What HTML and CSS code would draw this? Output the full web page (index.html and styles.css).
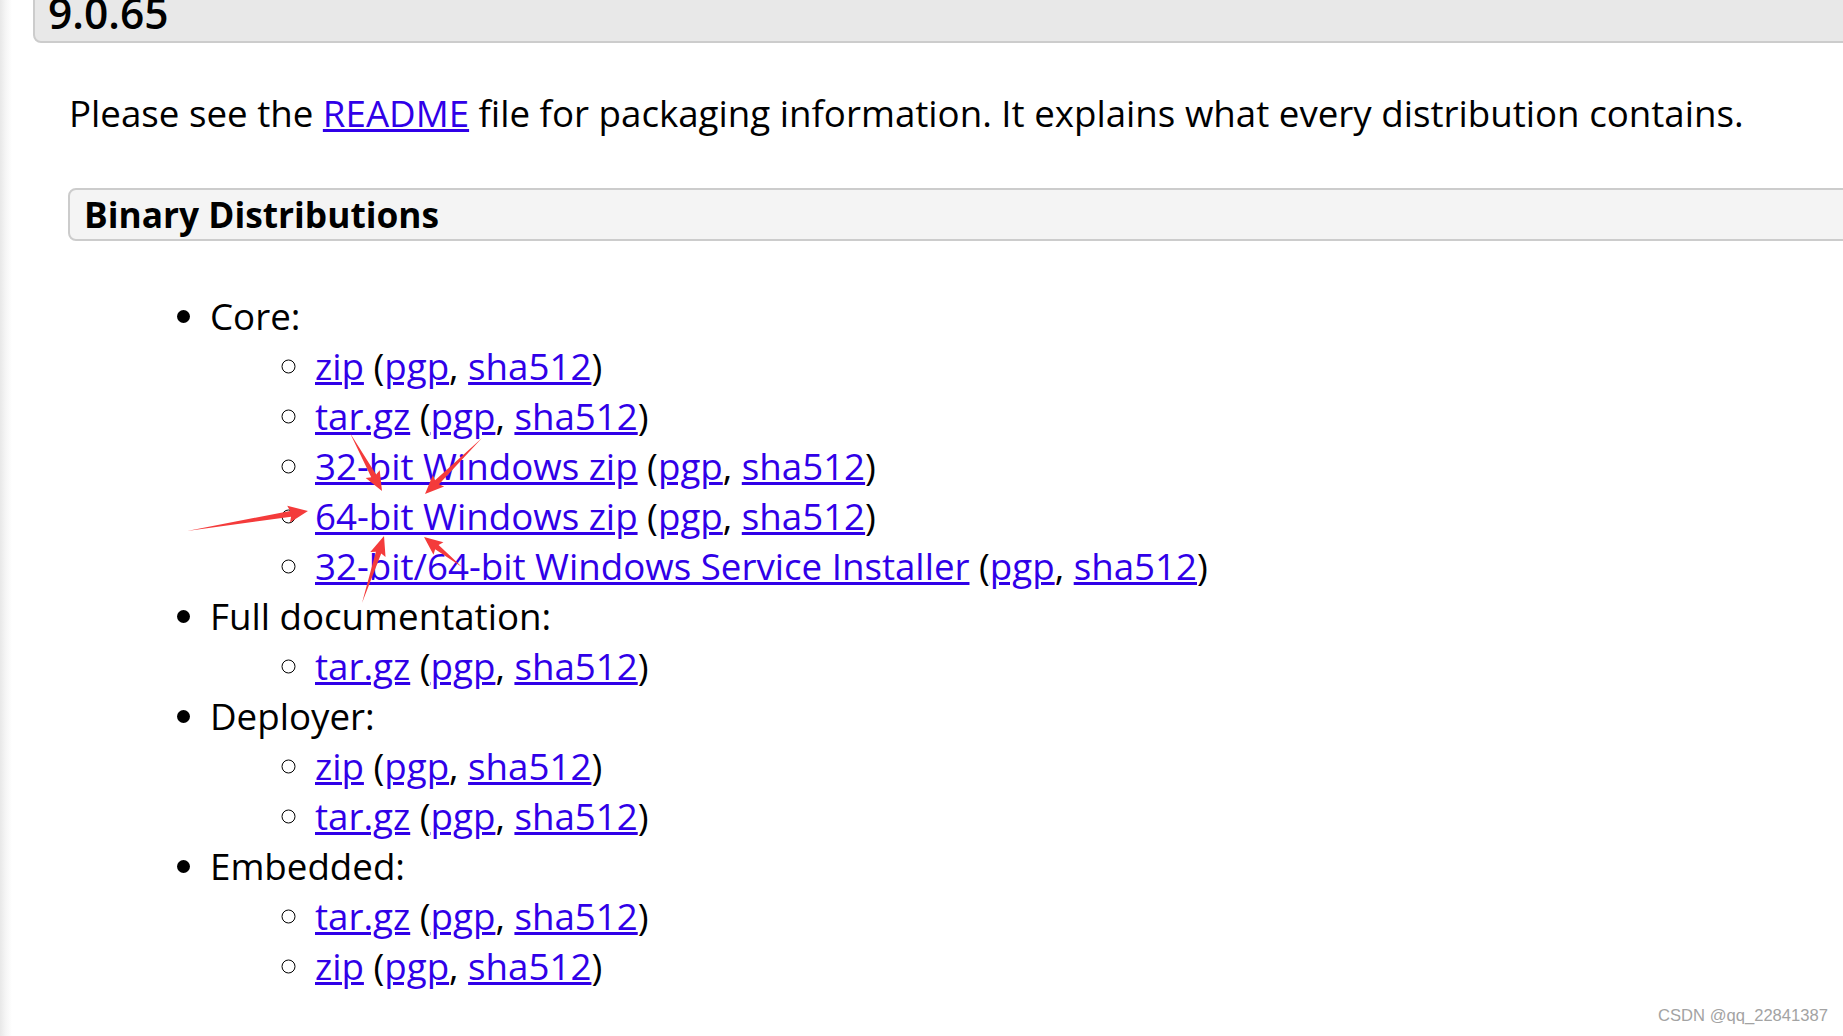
FILE: index.html
```html
<!DOCTYPE html>
<html lang="en">
<head>
<meta charset="utf-8">
<title>Apache Tomcat 9.0.65</title>
<link rel="stylesheet" href="styles.css">
</head>
<body>
<div class="page">
  <h3 class="version">9.0.65</h3>
  <div class="text">
    <p class="intro">Please see the <a href="#">README</a> file for packaging information. It explains what every distribution contains.</p>
    <h4 class="dist">Binary Distributions</h4>
    <ul class="dl">
      <li>Core:
        <ul>
          <li><a href="#">zip</a> (<a href="#">pgp</a>, <a href="#">sha512</a>)</li>
          <li><a href="#">tar.gz</a> (<a href="#">pgp</a>, <a href="#">sha512</a>)</li>
          <li><a href="#">32-bit Windows zip</a> (<a href="#">pgp</a>, <a href="#">sha512</a>)</li>
          <li><a href="#">64-bit Windows zip</a> (<a href="#">pgp</a>, <a href="#">sha512</a>)</li>
          <li><a href="#">32-bit/64-bit Windows Service Installer</a> (<a href="#">pgp</a>, <a href="#">sha512</a>)</li>
        </ul>
      </li>
      <li>Full documentation:
        <ul>
          <li><a href="#">tar.gz</a> (<a href="#">pgp</a>, <a href="#">sha512</a>)</li>
        </ul>
      </li>
      <li>Deployer:
        <ul>
          <li><a href="#">zip</a> (<a href="#">pgp</a>, <a href="#">sha512</a>)</li>
          <li><a href="#">tar.gz</a> (<a href="#">pgp</a>, <a href="#">sha512</a>)</li>
        </ul>
      </li>
      <li>Embedded:
        <ul>
          <li><a href="#">tar.gz</a> (<a href="#">pgp</a>, <a href="#">sha512</a>)</li>
          <li><a href="#">zip</a> (<a href="#">pgp</a>, <a href="#">sha512</a>)</li>
        </ul>
      </li>
    </ul>
  </div>
</div>

<svg class="arrows" width="1843" height="1036" viewBox="0 0 1843 1036" aria-hidden="true">
  <g fill="#f43b3b">
    <g transform="translate(350 433) rotate(61.1)">
      <polygon points="0,0 49,-2.8 47,-8 66.2,0 47,8 49,2.8"/>
    </g>
    <g transform="translate(482 438) rotate(135.5)">
      <polygon points="0,0 63,-2.8 61,-8 79.9,0 61,8 63,2.8"/>
    </g>
    <g transform="translate(187 531) rotate(-9.4)">
      <polygon points="0,0 105,-3 103,-8.5 122.6,0 103,8.5 105,3"/>
    </g>
    <g transform="translate(362 603) rotate(-71.8)">
      <polygon points="0,0 53,-2.8 51,-8 70.5,0 51,8 53,2.8"/>
    </g>
    <g transform="translate(462 567) rotate(-141.7)">
      <polygon points="0,0 32,-2.8 30,-8 48.4,0 30,8 32,2.8"/>
    </g>
  </g>
</svg>

<div class="watermark">CSDN @qq_22841387</div>
</body>
</html>
```

FILE: styles.css
```css
html, body {
  overflow: hidden;
}

body {
  margin: 0;
  height: 1036px;
  background: linear-gradient(to right, #e8e8e8 0px, #f6f6f6 6px, #ffffff 12px);
  font-family: "Open Sans", "Noto Sans", sans-serif;
  font-size: 36.7px;
  color: #000;
  position: relative;
}

.page {
  padding-left: 33px;
}

a {
  color: #3000e8;
  text-decoration-thickness: 2.5px;
}

.version {
  margin: -18px -40px 0 0;
  padding: 0 13px;
  font-size: 42.5px;
  font-weight: 600;
  line-height: 57px;
  background: #e8e8e8;
  border: 2px solid #cccccc;
  border-radius: 8px;
}

.text {
  padding-left: 35px;
}

.intro {
  margin: 45px 0 0;
  padding-left: 1px;
  line-height: 50px;
}

.dist {
  margin: 50px -40px 50px 0;
  padding: 0 13px 0 14px;
  font-size: 35.3px;
  font-weight: 700;
  line-height: 49px;
  background: #f4f4f4;
  border: 2px solid #cccccc;
  border-radius: 8px;
}

.dl {
  margin: 0;
  padding-left: 142px;
  line-height: 50px;
  list-style: disc;
}

.dl ul {
  margin: 0;
  padding-left: 105px;
  list-style: circle;
}

.arrows {
  position: absolute;
  left: 0;
  top: 0;
  pointer-events: none;
}

.watermark {
  position: absolute;
  right: 15px;
  bottom: 10px;
  font-family: "Liberation Sans", Arial, sans-serif;
  font-size: 16.6px;
  color: #a3a3a3;
}
```
